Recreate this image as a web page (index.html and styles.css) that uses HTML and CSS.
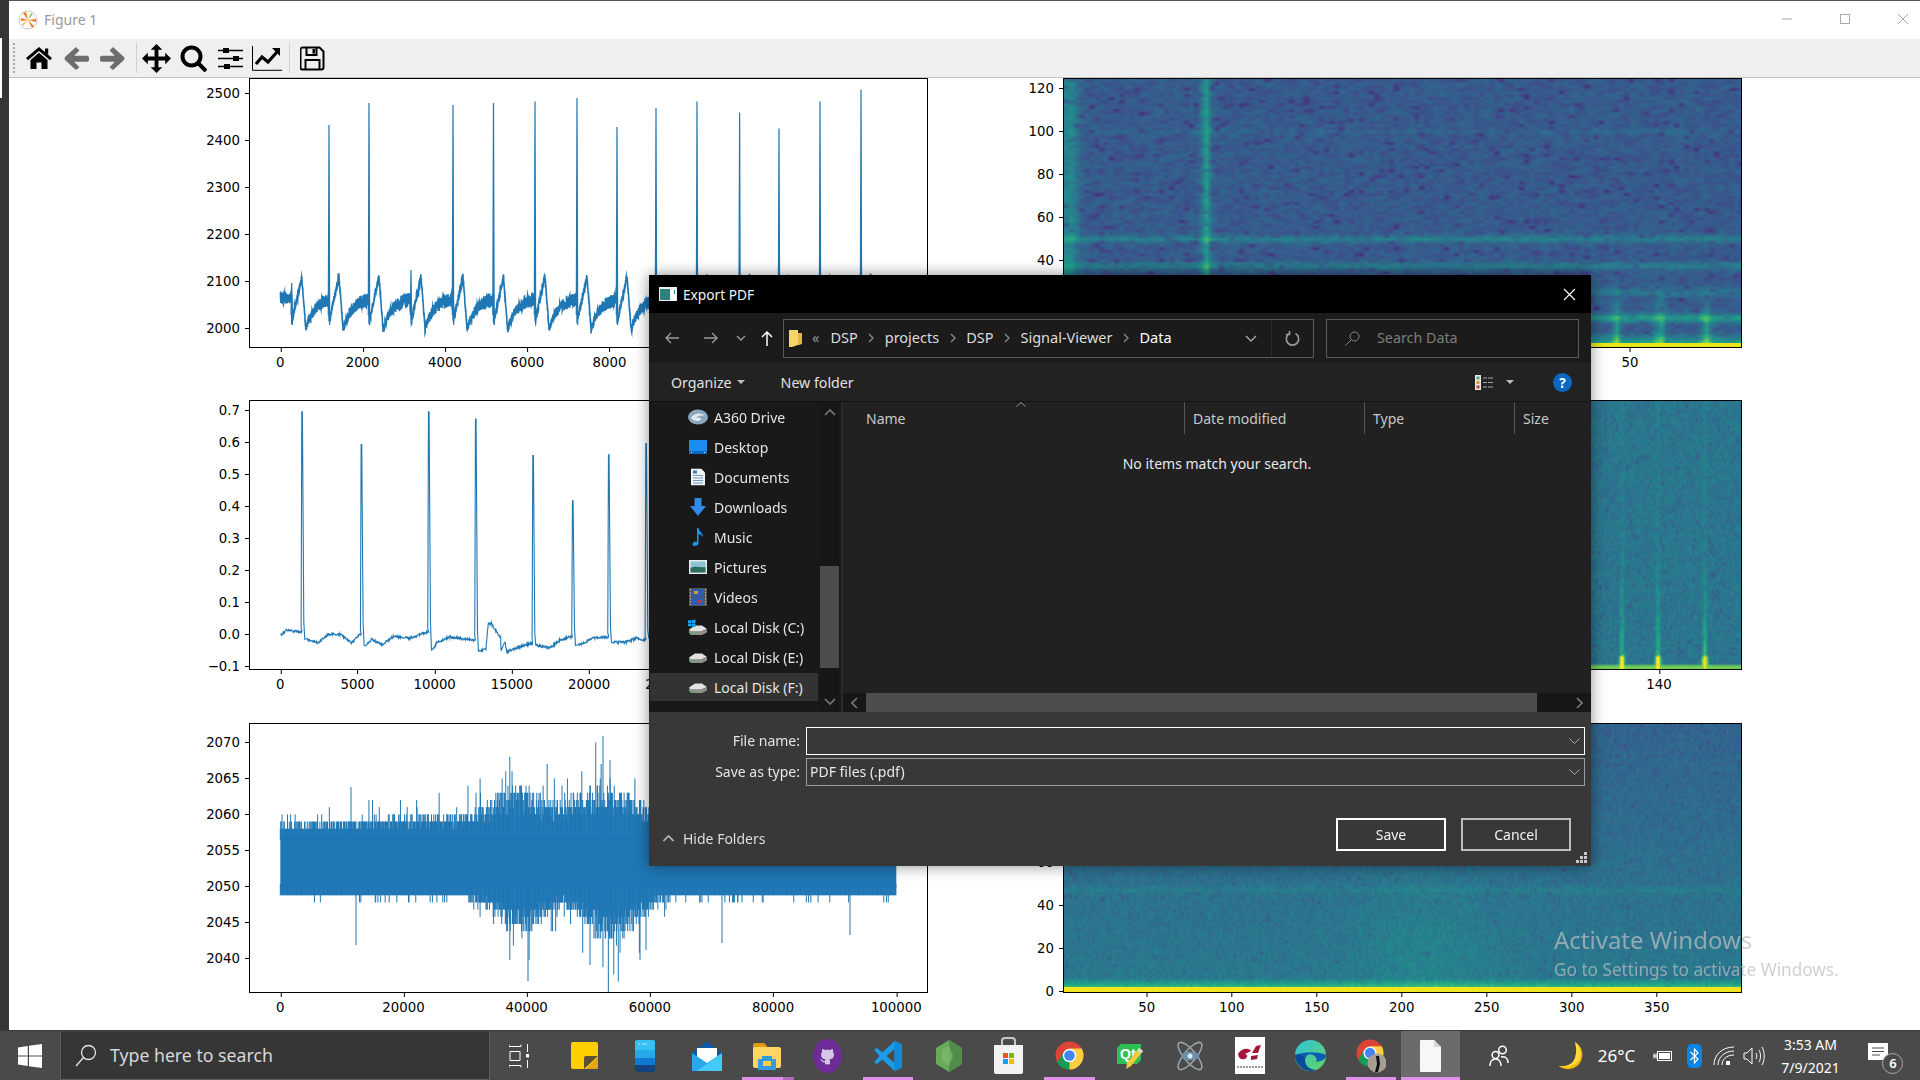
FILE: index.html
```html
<!DOCTYPE html>
<html lang="en">
  <head>
    <meta charset="UTF-8" />
    <title>Figure 1</title>
    <link rel="stylesheet" href="styles.css">
  </head>
  <body>
    <svg class="defs" width="0" height="0">
      <symbol id="chrome" viewBox="0 0 30 30">
        <circle cx="15" cy="15" r="14.5" fill="#db4437" />
        <path d="M15 15 2.4 22.3A14.5 14.5 0 0 0 15 29.5Z" fill="#0f9d58" />
        <path d="M15 15 15 29.5A14.5 14.5 0 0 0 27.6 7.8L15 7.8Z" fill="#ffcd40" />
        <path d="M15 15 2.4 22.3 8.7 11.4Z" fill="#0f9d58" />
        <circle cx="15" cy="15" r="7" fill="#fff" />
        <circle cx="15" cy="15" r="5.5" fill="#4285f4" />
      </symbol>
      <symbol id="disk" viewBox="0 0 20 14">
        <path d="M1 7.500V11l2 2h11l5-2.500v-3L13 9.500H3z" fill="#8f8f8f" />
        <path d="M1 7.500 7 3.500h7l5 3.500-6 2.500H3z" fill="#e2e2e2" />
        <rect x="3.500" y="10.500" width="3" height="1.500" fill="#46c34c" />
      </symbol>
      <symbol id="chev" viewBox="0 0 10 10">
        <path d="M3 1l4 4-4 4" fill="none" stroke="currentColor" stroke-width="1.4" />
      </symbol>
    </svg>

    <div class="screen">
      <div class="desk">
        <div class="edge"><i></i></div>
        <div class="window">
          <div class="titlebar">
            <svg class="fig-icon" viewBox="0 0 20 20" width="20" height="20">
              <circle cx="10" cy="10" r="9" fill="#fff" stroke="#c9c9c9" />
              <path d="M10 10 5 3l3-1zM10 10l8-1 0 3zM10 10l6 6-2 2zM10 10 3 11l0-3z" fill="#ef7a22" />
              <path d="M10 10l3-7 2 1z" fill="#8ec33f" />
              <path d="M10 10 5 16l-1-2z" fill="#f6c22c" />
            </svg>
            <span class="fig-title">Figure 1</span>
            <div class="win-btns">
              <svg width="12" height="12" viewBox="0 0 12 12"><path d="M1 6h10" stroke="#a8a8a8" /></svg>
              <svg width="12" height="12" viewBox="0 0 12 12"><rect x="1.5" y="1.5" width="9" height="9" fill="none" stroke="#a8a8a8" /></svg>
              <svg width="12" height="12" viewBox="0 0 12 12"><path d="M1 1l10 10M11 1 1 11" stroke="#a8a8a8" /></svg>
            </div>
          </div>

          <div class="toolbar">
            <span class="grip"></span>
            <svg class="tool t-home" width="26" height="22" viewBox="0 0 26 22">
              <path d="M13 0 26 11l-2 2.2L13 4 2 13.2 0 11zM19 1.5h3.2v6L19 5z" />
              <path d="M4.5 13 13 5.8 21.5 13v9h-6v-6.5h-5V22h-6z" />
            </svg>
            <svg class="tool t-back" width="25" height="25" viewBox="0 0 25 25">
              <path d="M12 1l3.4 3.4-5.2 5.4H23c1.3 0 2 1 2 2v2c0 1-.7 2-2 2H10.2l5.2 5.4L12 24 1.3 14.2c-1-1-1-2.4 0-3.4z" fill="#6d6d6d" />
            </svg>
            <svg class="tool t-fwd" width="25" height="25" viewBox="0 0 25 25">
              <path d="M13 1 9.6 4.4l5.2 5.4H2c-1.3 0-2 1-2 2v2c0 1 .7 2 2 2h12.800l-5.200 5.400L13 24l10.700-9.800c1-1 1-2.400 0-3.400z" fill="#6d6d6d" />
            </svg>
            <span class="tool-sep"></span>
            <svg class="tool t-move" width="29" height="29" viewBox="0 0 30 30">
              <path d="M15 0l6 6h-4v7h7V9l6 6-6 6v-4h-7v7h4l-6 6-6-6h4v-7H6v4l-6-6 6-6v4h7V6H9z" />
            </svg>
            <svg class="tool t-zoom" width="27" height="27" viewBox="0 0 27 27">
              <circle cx="11.5" cy="11.5" r="9" fill="none" stroke="#000" stroke-width="4" />
              <path d="M18 18l8 8" stroke="#000" stroke-width="4" />
            </svg>
            <svg class="tool t-sliders" width="25" height="23" viewBox="0 0 25 23">
              <path d="M0 3.5h25M0 11.5h25M0 19.5h25" stroke="#000" stroke-width="1.6" />
              <rect x="5" y="1" width="6" height="5" />
              <rect x="15" y="9" width="6" height="5" />
              <rect x="6" y="17" width="6" height="5" />
            </svg>
            <svg class="tool t-chart" width="30" height="25" viewBox="0 0 30 25">
              <path d="M.5 0v24.3H30" fill="none" stroke="#000" />
              <path d="M4 18l6-7 6 5 9-10" fill="none" stroke="#000" stroke-width="3.2" />
              <path d="M20 2h8v8z" />
            </svg>
            <span class="tool-sep"></span>
            <svg class="tool t-save" width="25" height="25" viewBox="0 0 25 25">
              <path d="M2.500 1.500h17l4 4v16a2 2 0 0 1-2 2h-19a2 2 0 0 1-2-2v-18a2 2 0 0 1 2-2z" fill="none" stroke="#000" stroke-width="2" />
              <path d="M6.500 2v7h10V2M5.500 23v-9h14v9" fill="none" stroke="#000" stroke-width="2" />
              <rect x="12.5" y="3" width="2.5" height="4.5" />
            </svg>
          </div>

          <div class="figure">
            <div class="plot" id="sig1"><canvas></canvas></div>
            <div class="plot" id="spec1"><canvas></canvas></div>
            <div class="plot" id="sig2"><canvas></canvas></div>
            <div class="plot" id="spec2"><canvas></canvas></div>
            <div class="plot" id="sig3"><canvas></canvas></div>
            <div class="plot" id="spec3"><canvas></canvas></div>
          </div>
        </div>
      </div>

      <div class="taskbar">
        <div class="start">
          <svg width="24" height="24" viewBox="0 0 24 24" fill="#fff">
            <path d="M0 3.400 9.800 2v9.400H0zM11 1.800 24 0v11.400H11zM0 12.600h9.800V22L0 20.600zM11 12.600h13V24l-13-1.800z" />
          </svg>
        </div>
        <div class="search">
          <svg width="22" height="24" viewBox="0 0 22 24" fill="none" stroke="#e6e6e6" stroke-width="1.3">
            <circle cx="13.5" cy="8.5" r="7" />
            <path d="M8.500 13.500 1 22" />
          </svg>
          <span>Type here to search</span>
        </div>
        <div class="taskview">
          <svg width="20" height="24" viewBox="0 0 20 24" fill="none" stroke="#fff">
            <path d="M0 2.500h12M0 21.500h12M1 7.500h10v9H1zM0 .5v2M12 .5v2M0 21.500v2M12 21.500v2M18.500 0v8M18.500 16v8" />
            <rect x="17" y="10" width="3" height="3.5" fill="#fff" stroke="none" />
          </svg>
        </div>

        <div class="slot">
          <svg width="27" height="27" viewBox="0 0 27 27">
            <rect width="27" height="27" rx="2" fill="#ffcf00" />
            <path d="M13 27V16a2 2 0 0 1 2-2h12L13 27z" fill="#5d5136" />
            <path d="M15 27 27 15v10a2 2 0 0 1-2 2z" fill="#e8a317" />
          </svg>
        </div>
        <div class="slot slot-gap">
          <svg width="20" height="32" viewBox="0 0 20 32">
            <path d="M0 2a2 2 0 0 1 2-2h16a2 2 0 0 1 2 2v8H0z" fill="#35c1f1" />
            <rect y="10" width="20" height="8" fill="#28a8ea" />
            <rect y="18" width="20" height="7" fill="#0f78d4" />
            <path d="M0 25h20v5a2 2 0 0 1-2 2H2a2 2 0 0 1-2-2z" fill="#14447d" />
            <path d="M3 4h2M7 4h5" stroke="#bde9fb" />
          </svg>
        </div>
        <div class="slot">
          <svg width="30" height="30" viewBox="0 0 30 30">
            <path d="M0 12 15 0l15 12v6H0z" fill="#0a5aa8" />
            <path d="M5 7h20v10l-10 6-10-6z" fill="#fff" />
            <path d="M0 12l15 10 15-10v18H0z" fill="#28a8ea" />
            <path d="M30 12v18H5z" fill="#50d9ff" opacity=".7" />
          </svg>
        </div>
        <div class="slot open open-split">
          <svg width="28" height="28" viewBox="0 0 28 28">
            <path d="M0 3a2 2 0 0 1 2-2h9l3 3v3H0z" fill="#e29b0c" />
            <rect y="5" width="28" height="21" rx="2" fill="#ffd564" />
            <path d="M5 28V17h4v-3h10v3h4v11z" fill="#3a9ae0" />
            <rect x="10" y="19" width="8" height="5" fill="#ffcf4a" />
          </svg>
        </div>
        <div class="slot">
          <svg width="29" height="34" viewBox="0 0 29 34">
            <ellipse cx="14.5" cy="17" rx="14.5" ry="17" fill="#6d2c97" />
            <circle cx="14.5" cy="16" r="9.5" fill="#d8c6e6" />
            <g transform="translate(4.500 6) scale(1.250)">
              <path fill="#6d2c97" d="M8 0C3.580 0 0 3.580 0 8c0 3.540 2.290 6.530 5.470 7.590.4.070.55-.17.55-.38 0-.19-.01-.82-.01-1.490-2.010.37-2.530-.49-2.690-.94-.09-.23-.48-.94-.82-1.130-.28-.15-.68-.52-.01-.53.63-.01 1.080.58 1.230.82.72 1.210 1.870.87 2.330.66.070-.52.280-.87.510-1.070-1.780-.2-3.640-.89-3.640-3.950 0-.87.310-1.590.82-2.150-.08-.2-.36-1.020.08-2.120 0 0 .67-.21 2.200.82.640-.18 1.320-.27 2-.27s1.360.09 2 .27c1.530-1.040 2.200-.82 2.200-.82.44 1.100.16 1.920.08 2.120.51.560.82 1.270.82 2.150 0 3.070-1.870 3.750-3.650 3.950.29.250.54.730.54 1.480 0 1.070-.01 1.930-.01 2.200 0 .21.150.46.550.38A8.013 8.013 0 0 0 16 8c0-4.420-3.580-8-8-8z" />
            </g>
          </svg>
        </div>
        <div class="slot open">
          <svg width="30" height="30" viewBox="0 0 30 30">
            <path fill-rule="evenodd" d="M21.500 0 9.500 11.500 3.800 7 1 8.500 6.500 15 1 21.500 3.800 23l5.700-4.500L21.500 30 29 26.500v-23zm0 8v14l-8-7z" fill="#1a9ce8" />
            <path d="M21.500 0 29 3.500v23L21.500 30z" fill="#0f8ad4" />
          </svg>
        </div>
        <div class="slot">
          <svg width="26" height="32" viewBox="0 0 26 32">
            <path d="M13 0l13 8v16l-13 8-13-8V8z" fill="#68a95c" />
            <path d="M13 0l13 8v16l-13 8z" fill="#4f8f49" />
            <path d="M6 10l7-4 4 10-4 10-7-6z" fill="#7dbb6c" opacity=".7" />
          </svg>
        </div>
        <div class="slot">
          <svg width="29" height="37" viewBox="0 0 29 37">
            <path d="M8 8V4a3 3 0 0 1 3-3h7a3 3 0 0 1 3 3v4" fill="none" stroke="#c8c8c8" stroke-width="2" />
            <path d="M0 8h29v27a2 2 0 0 1-2 2H2a2 2 0 0 1-2-2z" fill="#f2f2f2" />
            <rect x="9" y="16" width="5" height="5" fill="#f25022" />
            <rect x="15" y="16" width="5" height="5" fill="#7fba00" />
            <rect x="9" y="22" width="5" height="5" fill="#00a4ef" />
            <rect x="15" y="22" width="5" height="5" fill="#ffb900" />
          </svg>
        </div>
        <div class="slot open">
          <svg width="29" height="29"><use href="#chrome" /></svg>
        </div>
        <div class="slot">
          <svg width="26" height="28" viewBox="0 0 26 28">
            <path d="M4 2h20v16l-4 4H0V6z" fill="#2fbf55" />
            <text x="3" y="17" class="qt-mark">Qt</text>
            <path d="M22 6l4 3-12 15-5 3 1-6z" fill="#f6c83c" />
            <path d="M22 6l4 3-2 2.500-4-3z" fill="#d9d9d9" />
          </svg>
        </div>
        <div class="slot">
          <svg width="28" height="34" viewBox="0 0 28 34" fill="none" stroke="#9aa3a8" stroke-width="1.6">
            <ellipse cx="14" cy="17" rx="6" ry="17" transform="rotate(40 14 17)" />
            <ellipse cx="14" cy="17" rx="6" ry="17" transform="rotate(-40 14 17)" />
            <ellipse cx="14" cy="17" rx="9" ry="4.5" fill="#6e8fa8" stroke="none" />
            <circle cx="14" cy="17" r="2.5" fill="#dfe7ee" stroke="none" />
          </svg>
        </div>
        <div class="slot">
          <svg width="30" height="37" viewBox="0 0 30 37">
            <rect width="30" height="37" fill="#fff" />
            <path d="M3 17c4-7 12-6 13-3l-6 3c3 1 3 3 0 5-3 1-6 0-7-5zM17 16l4-7 5-1-3 8zM16 19l7-1-1 4-6 1z" fill="#a6163a" />
            <path d="M2 30h26" stroke="#9a9a9a" stroke-width="2" stroke-dasharray="2 1" />
          </svg>
        </div>
        <div class="slot">
          <svg width="31" height="31" viewBox="0 0 31 31">
            <defs>
              <linearGradient id="edgeg" x1="0" y1="0" x2="1" y2="1">
                <stop offset="0" stop-color="#2fc3e0" />
                <stop offset="1" stop-color="#63d35c" />
              </linearGradient>
            </defs>
            <circle cx="15.5" cy="15.5" r="15.5" fill="url(#edgeg)" />
            <path d="M0 15C1 27 12 33 21 30c-6 0-11-4-11-9 0-5 4-8 8-6s4 5 3 7c5-1 10-2 10-7C25 12 12 11 0 15z" fill="#0f5cb0" />
            <path d="M10 21c0 5 5 9 11 9-9 3-20-3-21-15 3-1 10-1 10 6z" fill="#0a4a96" />
          </svg>
        </div>
        <div class="slot open">
          <svg class="chrome-user" width="30" height="34" viewBox="0 0 30 34">
            <use href="#chrome" width="28" height="28" x="0" y="0" />
            <circle cx="21" cy="24" r="9.5" fill="#a79f93" />
            <path d="M20 17h3l1 8-2 8h-3l2-8z" fill="#111" />
          </svg>
        </div>
        <div class="slot open active">
          <svg width="21" height="32" viewBox="0 0 21 32">
            <path d="M1 0h13l7 7v24a1 1 0 0 1-1 1H1a1 1 0 0 1-1-1V1a1 1 0 0 1 1-1z" fill="#f7f8f9" />
            <path d="M14 0l7 7h-7z" fill="#d4d6d8" />
          </svg>
        </div>

        <div class="tray">
          <div class="tray-item people">
            <svg width="20" height="22" viewBox="0 0 20 22" fill="none" stroke="#fff" stroke-width="1.5">
              <circle cx="13.5" cy="5" r="3.8" />
              <circle cx="6.5" cy="10" r="3.4" />
              <path d="M1 21c0-4 2-7 5.500-7s5.500 3 5.500 7M12 12c4-1 7 1 7 6" />
            </svg>
          </div>
          <div class="tray-item moon">
            <svg width="24" height="28" viewBox="0 0 24 28">
              <path d="M16 0c7 4 9 12 6 19-3 7-12 10-19 7-2-1-3-2-3-2 8 1 14-2 16-8 2-6 1-12 0-16z" fill="#f5b800" />
              <path d="M16 0c6 5 7 12 4 18-3 5-10 8-17 7-2 0-3-1-3-1 8 1 14-2 16-8 2-6 1-12 0-16z" fill="#ffd83d" />
            </svg>
          </div>
          <div class="tray-item temp">26°C</div>
          <div class="tray-item battery">
            <svg width="20" height="14" viewBox="0 0 20 14" fill="none" stroke="#fff">
              <rect x="4.5" y="2.5" width="14" height="9" />
              <rect x="6" y="4" width="11" height="6" fill="#fff" stroke="none" />
              <path d="M0 7h4M1 4.500v5M3 4.500v5" />
            </svg>
          </div>
          <div class="tray-item">
            <svg width="15" height="24" viewBox="0 0 15 24">
              <rect width="15" height="24" rx="5" fill="#0a84e8" />
              <path d="M3.500 8 11 15l-3.500 4V5L11 9l-7.500 7" fill="none" stroke="#fff" stroke-width="1.2" />
            </svg>
          </div>
          <div class="tray-item">
            <svg width="22" height="20" viewBox="0 0 22 20" fill="none" stroke="#fff">
              <path d="M1 19C1 9 9 1 21 1M5 19c0-7 6-14 16-14M9 19c0-5 4-10 12-10" />
              <rect x="13" y="15" width="4" height="4" fill="#fff" stroke="none" />
            </svg>
          </div>
          <div class="tray-item">
            <svg width="22" height="22" viewBox="0 0 22 22" fill="none" stroke="#fff">
              <path d="M1 8v6h3l5 5V3L4 8zM13 8c1 2 1 4 0 6M16 5c2 3 2 9 0 12M19 2c3 5 3 13 0 18" />
            </svg>
          </div>
          <div class="clock">
            <span>3:53 AM</span>
            <span>7/9/2021</span>
          </div>
          <div class="notif">
            <svg width="20" height="21" viewBox="0 0 20 21">
              <path d="M0 0h20v17H0z" fill="#fff" />
              <path d="M4 5h12M4 8.500h12M4 12h8" stroke="#4a4a4a" stroke-width="1.2" />
            </svg>
            <span class="badge">6</span>
          </div>
        </div>
      </div>

      <div class="watermark">
        <div class="wm-big">Activate Windows</div>
        <div class="wm-small">Go to Settings to activate Windows.</div>
      </div>

      <div class="dialog">
        <div class="dlg-title">
          <svg width="18" height="14" viewBox="0 0 18 14">
            <rect width="18" height="14" fill="#f0f0f0" />
            <rect x="1" y="2" width="10" height="11" fill="#2f7f7a" />
            <rect x="12" y="2" width="5" height="11" fill="#fff" />
            <rect x="15" y="3" width="1" height="4" fill="#2f7f7a" />
          </svg>
          <span>Export PDF</span>
          <svg class="dlg-close" width="13" height="13" viewBox="0 0 13 13">
            <path d="M1 1l11 11M12 1 1 12" stroke="#fff" stroke-width="1.1" />
          </svg>
        </div>

        <div class="dlg-nav">
          <svg class="nav-btn" width="14" height="12" viewBox="0 0 14 12" fill="none" stroke="#9a9a9a" stroke-width="1.4"><path d="M14 6H1M6 1 1 6l5 5" /></svg>
          <svg class="nav-btn fwd" width="14" height="12" viewBox="0 0 14 12" fill="none" stroke="#9a9a9a" stroke-width="1.4"><path d="M0 6h13M8 1l5 5-5 5" /></svg>
          <svg class="nav-btn drop" width="10" height="6" viewBox="0 0 10 6" fill="none" stroke="#9a9a9a" stroke-width="1.4"><path d="M1 1l4 4 4-4" /></svg>
          <svg class="nav-btn up" width="12" height="15" viewBox="0 0 12 15" fill="none" stroke="#fff" stroke-width="1.5"><path d="M6 15V1M1 6l5-5 5 5" /></svg>
          <div class="address">
            <svg class="addr-folder" width="13" height="17" viewBox="0 0 13 17">
              <path d="M0 0h9v3h3v11l-9 3H0z" fill="#f5d46a" />
              <path d="M9 3h4v11l-4 1z" fill="#e6b53d" />
            </svg>
            <span class="addr-more">«</span>
            <span class="crumb">DSP</span>
            <svg class="chev" width="10" height="10"><use href="#chev" /></svg>
            <span class="crumb">projects</span>
            <svg class="chev" width="10" height="10"><use href="#chev" /></svg>
            <span class="crumb">DSP</span>
            <svg class="chev" width="10" height="10"><use href="#chev" /></svg>
            <span class="crumb">Signal-Viewer</span>
            <svg class="chev" width="10" height="10"><use href="#chev" /></svg>
            <span class="crumb current">Data</span>
            <svg class="addr-drop" width="12" height="7" viewBox="0 0 12 7" fill="none" stroke="#aaa" stroke-width="1.4"><path d="M1 1l5 5 5-5" /></svg>
            <span class="addr-refresh">
              <svg width="15" height="16" viewBox="0 0 15 16" fill="none" stroke="#9a9a9a" stroke-width="1.6">
                <path d="M4.500 3.500a6.200 6.200 0 1 0 6 0M4.500 1v3.500H1" />
              </svg>
            </span>
          </div>
          <div class="searchbox">
            <svg width="15" height="15" viewBox="0 0 15 15" fill="none" stroke="#8a8a8a"><circle cx="9.5" cy="5.5" r="4.5" /><path d="M6 9l-5.500 5.500" /></svg>
            <span>Search Data</span>
          </div>
        </div>

        <div class="dlg-cmd">
          <span class="cmd">Organize</span>
          <i class="caret"></i>
          <span class="cmd new-folder">New folder</span>
          <svg class="view-icon" width="18" height="15" viewBox="0 0 18 15">
            <rect width="6" height="15" fill="#e8e8e8" />
            <rect x="1.5" y="1.5" width="3" height="3" fill="#4a7" />
            <rect x="1.5" y="6" width="3" height="3" fill="#c93" />
            <rect x="1.5" y="10.5" width="3" height="3" fill="#b43" />
            <path d="M8 3h4M13 3h5M8 7.500h4M13 7.500h5M8 12h4M13 12h5" stroke="#aaa" />
          </svg>
          <i class="caret view-caret"></i>
          <span class="help">?</span>
        </div>

        <div class="dlg-body">
          <div class="nav-pane">
            <ul class="tree">
              <li>
                <svg width="20" height="16" viewBox="0 0 20 16"><ellipse cx="10" cy="8" rx="10" ry="7.5" fill="#8aa7bd" /><path d="M3 9c2-5 11-6 14-2-4-1-8 0-9 2 3-1 6 0 5 2-3 2-8 1-10-2z" fill="#dfe9f0" /></svg>
                A360 Drive
              </li>
              <li>
                <svg width="18" height="14" viewBox="0 0 18 14"><rect width="18" height="14" fill="#1d8bf0" /><path d="M0 11h18v3H0z" fill="#0d66c0" /><path d="M2 12.500h1M15 12.500h1" stroke="#fff" /></svg>
                Desktop
              </li>
              <li>
                <svg width="14" height="17" viewBox="0 0 14 17"><path d="M0 0h10l4 4v13H0z" fill="#f1f3f5" /><path d="M2 7h10M2 9.500h10M2 12h10M2 14.500h10" stroke="#6e9ac4" /><rect x="2" y="2" width="4" height="3" fill="#3a7fc0" /></svg>
                Documents
              </li>
              <li>
                <svg width="16" height="18" viewBox="0 0 16 18"><path d="M4.500 0h7v8H16l-8 10L0 8h4.500z" fill="#2e8be8" /></svg>
                Downloads
              </li>
              <li>
                <svg width="12" height="18" viewBox="0 0 12 18"><path d="M5 0h1.500c.5 4 5 5 4.500 9-1-2-3-3-4.500-3v9c0 2-2 3-4 3S0 16.500 1 15s2.500-1.500 4-1z" fill="#1e96ee" /></svg>
                Music
              </li>
              <li>
                <svg width="18" height="14" viewBox="0 0 18 14"><rect width="18" height="14" fill="#e9ecef" /><rect x="1.5" y="1.5" width="15" height="11" fill="#8ec5d6" /><path d="M1.500 8c5-3 10 0 15-1v5.500h-15z" fill="#2e6e5e" /></svg>
                Pictures
              </li>
              <li>
                <svg width="18" height="18" viewBox="0 0 18 18"><rect width="18" height="18" fill="#555" /><rect x="3" y="1" width="12" height="7.5" fill="#2a5fb5" /><rect x="3" y="9.5" width="12" height="7.5" fill="#2a5fb5" /><rect x="5" y="3" width="4" height="3" fill="#d93" /><rect x="8" y="12" width="4" height="3" fill="#c33" /><path d="M1.500 1v16M16.500 1v16" stroke="#bbb" stroke-dasharray="1.500 1.500" /></svg>
                Videos
              </li>
              <li>
                <svg width="20" height="18" viewBox="0 0 20 18"><use href="#disk" width="20" height="14" y="4" /><path d="M0 2.500 3.500 2v3H0zM4 2l3.500-.5V5H4zM0 5.500h3.500v3L0 8zM4 5.500h3.500v3.500L4 8.500z" fill="#10a5f5" /></svg>
                Local Disk (C:)
              </li>
              <li>
                <svg width="20" height="14"><use href="#disk" /></svg>
                Local Disk (E:)
              </li>
              <li class="selected">
                <svg width="20" height="14"><use href="#disk" /></svg>
                Local Disk (F:)
              </li>
              <li>
                <svg width="20" height="14"><use href="#disk" /></svg>
                New Volume (G:)
              </li>
            </ul>
            <div class="vscroll">
              <svg width="12" height="7" viewBox="0 0 12 7" fill="none" stroke="#7a7a7a" stroke-width="1.6"><path d="M1 6l5-5 5 5" /></svg>
              <div class="vthumb"></div>
              <svg width="12" height="7" viewBox="0 0 12 7" fill="none" stroke="#7a7a7a" stroke-width="1.6"><path d="M1 1l5 5 5-5" /></svg>
            </div>
          </div>
          <div class="list-pane">
            <div class="list-head">
              <span class="col col-name">Name<svg class="sort" width="10" height="5" viewBox="0 0 10 5" fill="none" stroke="#999"><path d="M.5 4.500 5 .5l4.500 4" /></svg></span>
              <span class="col col-date">Date modified</span>
              <span class="col col-type">Type</span>
              <span class="col col-size">Size</span>
            </div>
            <div class="empty">No items match your search.</div>
            <div class="hscroll">
              <svg width="7" height="12" viewBox="0 0 7 12" fill="none" stroke="#7a7a7a" stroke-width="1.6"><path d="M6 1 1 6l5 5" /></svg>
              <div class="hthumb"></div>
              <svg width="7" height="12" viewBox="0 0 7 12" fill="none" stroke="#7a7a7a" stroke-width="1.6"><path d="M1 1l5 5-5 5" /></svg>
            </div>
          </div>
        </div>

        <div class="dlg-foot">
          <div class="field">
            <label>File name:</label>
            <div class="combo focus">
              <span></span>
              <svg width="11" height="6" viewBox="0 0 11 6" fill="none" stroke="#aaa"><path d="M.5.5l5 5 5-5" /></svg>
            </div>
          </div>
          <div class="field">
            <label>Save as type:</label>
            <div class="combo">
              <span>PDF files (.pdf)</span>
              <svg width="11" height="6" viewBox="0 0 11 6" fill="none" stroke="#aaa"><path d="M.5.5l5 5 5-5" /></svg>
            </div>
          </div>
          <div class="foot-row">
            <div class="hide-folders">
              <svg width="11" height="7" viewBox="0 0 11 7" fill="none" stroke="#bbb" stroke-width="1.6"><path d="M.5 6l5-5 5 5" /></svg>
              <span>Hide Folders</span>
            </div>
            <div class="btn primary">Save</div>
            <div class="btn">Cancel</div>
          </div>
          <svg class="resize" width="12" height="12" viewBox="0 0 12 12" fill="#c8c8c8">
            <rect x="8" y="0" width="3" height="3" /><rect x="4" y="4" width="3" height="3" /><rect x="8" y="4" width="3" height="3" />
            <rect x="0" y="8" width="3" height="3" /><rect x="4" y="8" width="3" height="3" /><rect x="8" y="8" width="3" height="3" />
          </svg>
        </div>
      </div>
    </div>

    <script src="plots.js"></script>
  </body>
</html>
```

FILE: styles.css
```css
* {
  box-sizing: border-box;
}

html,
body {
  margin: 0;
  padding: 0;
  background-color: #fff;
}

body {
  font-family: "Noto Sans", sans-serif;
  overflow: hidden;
}

.defs {
  position: absolute;
}

.screen {
  position: relative;
  width: 1920px;
  height: 1080px;
  display: flex;
  flex-direction: column;
  overflow: hidden;
}

.desk {
  flex: 1;
  display: flex;
  min-height: 0;
}

.edge {
  width: 9px;
  background-color: #363636;
  padding-top: 38px;
}

.edge i {
  display: block;
  width: 2px;
  height: 60px;
  background-color: #fff;
}

.window {
  flex: 1;
  background-color: #fff;
  border-top: 1px solid #555;
  min-width: 0;
}

/* matplotlib window */
.titlebar {
  height: 38px;
  display: flex;
  align-items: center;
  padding-left: 9px;
  color: #999;
}

.fig-icon {
  margin-right: 6px;
  margin-top: -1px;
}

.fig-title {
  font-size: 14px;
  margin-top: -1px;
}

.win-btns {
  margin-left: auto;
  display: flex;
  gap: 46px;
  padding-right: 11px;
  margin-top: -2px;
}

.toolbar {
  height: 39px;
  background-color: #efefef;
  border-bottom: 1px solid #c4c4c4;
  display: flex;
  align-items: center;
  padding-left: 4px;
}

.grip {
  width: 3px;
  height: 30px;
  margin-right: 10px;
  border-left: 2px dotted #a8a8a8;
}

.tool {
  flex: none;
}

.tool-sep {
  width: 1px;
  height: 30px;
  margin-left: 11px;
  background-color: #cfcfcf;
}

.t-back {
  margin-left: 12px;
}

.t-fwd {
  margin-left: 11px;
}

.t-move {
  margin-left: 5px;
}

.t-zoom {
  margin-left: 9px;
}

.t-sliders {
  margin-left: 11px;
}

.t-chart {
  margin-left: 9px;
}

.t-chart + .tool-sep {
  margin-left: 7px;
}

.t-save {
  margin-left: 10px;
}

.figure {
  display: grid;
  grid-template-columns: 679px 679px;
  grid-template-rows: 322px 323px 270px;
  column-gap: 135px;
  margin-left: 240px;
}

.plot {
  position: relative;
  height: 270px;
  border: 1px solid #000;
  font-family: "DejaVu Sans", sans-serif;
  font-size: 13.3px;
  color: #000;
}

.plot canvas {
  display: block;
}

.xt,
.yt {
  position: absolute;
  line-height: 16px;
  white-space: nowrap;
}

.xt {
  top: 100%;
  padding-top: 8px;
  transform: translateX(-50%);
}

.xt::before {
  content: "";
  position: absolute;
  top: 0;
  left: 50%;
  width: 1px;
  height: 5px;
  background-color: #000;
}

.yt {
  right: 100%;
  padding-right: 10px;
  margin-top: 1px;
  transform: translateY(-50%);
}

.yt::after {
  content: "";
  position: absolute;
  right: 0;
  top: calc(50% - 1px);
  width: 5px;
  height: 1px;
  background-color: #000;
}

/* taskbar */
.taskbar {
  height: 50px;
  flex: none;
  display: flex;
  align-items: stretch;
  background-color: #4a4a4a;
  border-top: 1px solid #3a3a3a;
  color: #fff;
}

.start {
  width: 60px;
  flex: none;
  display: flex;
  align-items: center;
  justify-content: center;
}

.search {
  width: 430px;
  flex: none;
  background-color: #363636;
  border: 1px solid #5c5c5c;
  border-top-color: #444;
  display: flex;
  align-items: center;
  padding-left: 14px;
  gap: 13px;
  font-size: 17.7px;
  color: #d8d8d8;
}

.search span {
  margin-top: -2px;
}

.taskview {
  width: 64px;
  flex: none;
  display: flex;
  align-items: center;
  justify-content: center;
  padding-right: 6px;
}

.slot {
  position: relative;
  width: 60.4px;
  flex: none;
  display: flex;
  align-items: center;
  justify-content: center;
}

.slot-gap {
  margin-right: 2px;
}

.open::after {
  content: "";
  position: absolute;
  left: 5px;
  right: 5px;
  bottom: 0;
  height: 3px;
  background-color: #df8fe8;
}

.open-split::after {
  left: 5px;
  right: 15px;
}

.open-split::before {
  content: "";
  position: absolute;
  right: 4px;
  width: 11px;
  bottom: 0;
  height: 3px;
  background-color: #b06bb8;
}

.active {
  width: 59px;
  background-color: #6b6b6b;
}

.active::after {
  left: 0;
  right: 0;
}

.tray {
  flex: 1;
  display: flex;
  align-items: center;
  padding-left: 9px;
}

.tray-item {
  width: 30px;
  display: flex;
  align-items: center;
  justify-content: center;
  flex: none;
}

.people {
  width: 60px;
  margin-right: 22px;
}

.moon {
  width: 40px;
}

.temp {
  width: 50px;
  font-size: 17px;
  margin-right: 7px;
}

.battery {
  margin-right: 1px;
}

.clock {
  width: 82px;
  display: flex;
  flex-direction: column;
  align-items: center;
  font-size: 14px;
  line-height: 23px;
  flex: none;
}

.notif {
  position: relative;
  width: 58px;
  display: flex;
  justify-content: center;
  padding-right: 4px;
  padding-bottom: 4px;
}

.badge {
  position: absolute;
  left: 31px;
  top: 10px;
  width: 21px;
  height: 21px;
  border-radius: 50%;
  background-color: #4a4a4a;
  border: 1px solid #aaa;
  text-align: center;
  font-size: 13px;
  font-weight: 600;
  line-height: 19px;
}

/* windows watermark sits over the page */
.watermark {
  position: absolute;
  left: 1554px;
  top: 923px;
  color: rgba(186, 190, 192, 0.72);
  white-space: nowrap;
}

.wm-big {
  font-size: 24px;
  line-height: 34px;
}

.wm-small {
  font-size: 17.2px;
  line-height: 26px;
}

/* export dialog */
.dialog {
  position: absolute;
  left: 649px;
  top: 275px;
  width: 942px;
  height: 591px;
  display: flex;
  flex-direction: column;
  background-color: #383838;
  box-shadow: 0 0 14px rgba(0, 0, 0, 0.45);
  color: #e8e8e8;
  font-size: 14px;
}

.dlg-title {
  height: 38px;
  flex: none;
  background-color: #000;
  color: #f2f2f2;
  display: flex;
  align-items: center;
  padding-left: 10px;
  gap: 6px;
  font-size: 13.7px;
}

.dlg-close {
  margin-left: auto;
  margin-right: 15px;
}

.dlg-nav {
  height: 50px;
  flex: none;
  background-color: #1b1b1b;
  display: flex;
  align-items: center;
  padding-left: 16px;
}

.nav-btn {
  flex: none;
}

.fwd {
  margin-left: 25px;
}

.drop {
  margin-left: 18px;
}

.up {
  margin-left: 15px;
}

.address {
  margin-left: 10px;
  width: 531px;
  height: 39px;
  border: 1px solid #5a5a5a;
  display: flex;
  align-items: center;
  padding-left: 5px;
  font-size: 14.5px;
  color: #dcdcdc;
}

.crumb {
  margin-top: -2px;
}

.addr-more {
  margin-left: 10px;
  margin-right: 11px;
  margin-top: -2px;
  color: #999;
}

.chev {
  margin: 0 8.5px;
  color: #888;
  margin-top: -1px;
}

.current {
  color: #fff;
}

.addr-drop {
  margin-left: auto;
  margin-right: 14px;
}

.addr-refresh {
  width: 42px;
  height: 100%;
  border-left: 1px solid #2a2a2a;
  display: flex;
  align-items: center;
  justify-content: center;
}

.searchbox {
  margin-left: 12px;
  width: 253px;
  height: 39px;
  border: 1px solid #5a5a5a;
  display: flex;
  align-items: center;
  padding-left: 18px;
  gap: 17px;
  font-size: 14.3px;
  color: #7d7d7d;
}

.searchbox span {
  margin-top: -2px;
}

.dlg-cmd {
  height: 39px;
  flex: none;
  background-color: #222;
  border-bottom: 1px solid #111;
  display: flex;
  align-items: center;
  padding-left: 22px;
}

.cmd {
  color: #e0e0e0;
  margin-top: 1px;
  font-size: 14.2px;
}

.caret {
  width: 0;
  height: 0;
  border-left: 4px solid transparent;
  border-right: 4px solid transparent;
  border-top: 4px solid #bdbdbd;
  margin-left: 5px;
}

.new-folder {
  margin-left: 36px;
}

.view-icon {
  margin-left: auto;
}

.view-caret {
  margin-left: 13px;
}

.help {
  width: 19px;
  height: 19px;
  margin-left: 39px;
  margin-right: 19px;
  border-radius: 50%;
  background-color: #0a68c4;
  color: #fff;
  font-size: 14px;
  font-weight: 700;
  text-align: center;
  line-height: 19px;
}

.dlg-body {
  height: 310px;
  flex: none;
  display: flex;
}

.nav-pane {
  width: 194px;
  flex: none;
  display: flex;
  background-color: #191919;
  border-right: 2px solid #2a2a2a;
  overflow: hidden;
}

.tree {
  list-style: none;
  margin: 0;
  padding: 0;
  width: 169px;
  flex: none;
  height: 310px;
  overflow: hidden;
}

.tree li {
  height: 30px;
  display: flex;
  align-items: center;
  position: relative;
  padding-left: 64px;
  margin-left: 1px;
  color: #e4e4e4;
  white-space: nowrap;
}

.tree svg {
  position: absolute;
  left: 48px;
  top: 50%;
  transform: translate(-50%, -50%);
}

.tree .selected {
  background-color: #333;
  height: 28px;
  margin: 1px 0 1px 1px;
}

.vscroll {
  width: 19px;
  flex: none;
  margin-left: 2px;
  background-color: #171717;
  display: flex;
  flex-direction: column;
  align-items: center;
  justify-content: space-between;
  padding: 7px 0;
  position: relative;
}

.vthumb {
  position: absolute;
  left: 0;
  right: 0;
  top: 164px;
  height: 102px;
  background-color: #4d4d4d;
}

.list-pane {
  flex: 1;
  min-width: 0;
  background-color: #212121;
  display: flex;
  flex-direction: column;
  position: relative;
}

.list-head {
  height: 32px;
  flex: none;
  display: flex;
  font-size: 14px;
  color: #c8c8c8;
  align-items: stretch;
  line-height: 34px;
}

.col {
  display: flex;
  align-items: center;
  padding-left: 8px;
  padding-top: 2px;
  border-left: 1px solid #555;
  position: relative;
}

.col-name {
  width: 341px;
  padding-left: 23px;
  border-left: none;
}

.sort {
  position: absolute;
  left: 173px;
  top: 0;
}

.col-date {
  width: 180px;
}

.col-type {
  width: 150px;
}

.empty {
  flex: 1;
  text-align: center;
  padding-top: 20px;
  color: #e8e8e8;
}

.hscroll {
  height: 19px;
  flex: none;
  background-color: #171717;
  display: flex;
  align-items: center;
  padding-left: 8px;
  padding-right: 8px;
}

.hthumb {
  width: 671px;
  height: 100%;
  margin-left: 8px;
  margin-right: auto;
  background-color: #4d4d4d;
}

.dlg-foot {
  flex: 1;
  position: relative;
  padding-top: 14px;
}

.field {
  display: flex;
  align-items: center;
  height: 29px;
  margin-bottom: 2px;
}

.field label {
  width: 151px;
  text-align: right;
  color: #e4e4e4;
}

.combo {
  margin-left: 6px;
  width: 779px;
  height: 28px;
  border: 1px solid #9c9c9c;
  display: flex;
  align-items: center;
  justify-content: space-between;
  padding: 0 4px 0 3px;
  color: #e8e8e8;
}

.combo.focus {
  border-color: #fff;
}

.foot-row {
  position: absolute;
  left: 0;
  right: 0;
  top: 106px;
  display: flex;
  align-items: center;
}

.hide-folders {
  margin-left: 14px;
  margin-right: auto;
  margin-top: 8px;
  display: flex;
  align-items: center;
  gap: 9px;
  color: #dcdcdc;
}

.btn {
  width: 110px;
  height: 33px;
  border: 2px solid #bcbcbc;
  display: flex;
  align-items: center;
  justify-content: center;
  color: #f2f2f2;
  margin-right: 20px;
}

.btn.primary {
  border-color: #fff;
  margin-right: 15px;
}

.resize {
  position: absolute;
  right: 3px;
  bottom: 2px;
}

.qt-mark {
  font-family: "Liberation Sans", sans-serif;
  font-size: 14px;
  font-weight: 700;
  fill: #fff;
}
```

FILE: plots.js
```js
// small seeded random so the noise is the same on every load
let seed = 12345;
function rnd() {
  seed = (seed * 1664525 + 1013904223) % 4294967296;
  return seed / 4294967296;
}

const VIRIDIS = [
  [68, 1, 84], [72, 36, 117], [65, 68, 135], [53, 95, 141], [42, 120, 142],
  [33, 145, 140], [34, 168, 132], [68, 191, 112], [122, 209, 81], [189, 223, 38], [253, 231, 37],
];

function viridis(v) {
  v = Math.max(0, Math.min(0.9999, v)) * 10;
  const i = Math.floor(v);
  const f = v - i;
  return VIRIDIS[i].map((c, k) => c + (VIRIDIS[i + 1][k] - c) * f);
}

function gauss(x, c, s) {
  return Math.exp(-((x - c) * (x - c)) / (2 * s * s));
}

// canvas covers the inside of the axes, drawing uses page coordinates
function setup(id) {
  const plot = document.getElementById(id);
  const cv = plot.querySelector("canvas");
  cv.width = plot.clientWidth;
  cv.height = plot.clientHeight;
  const box = plot.getBoundingClientRect();
  const ctx = cv.getContext("2d");
  ctx.translate(-(Math.round(box.left) + 1), -(Math.round(box.top) + 1));
  return { plot, cv, ctx, left: Math.round(box.left) + 1, top: Math.round(box.top) + 1 };
}

function ticks(p, xs, ys) {
  xs.forEach(([label, px]) => {
    const s = document.createElement("span");
    s.className = "xt";
    s.textContent = label;
    s.style.left = px - p.left + "px";
    p.plot.appendChild(s);
  });
  ys.forEach(([label, py]) => {
    const s = document.createElement("span");
    s.className = "yt";
    s.textContent = label;
    s.style.top = py - p.top + "px";
    p.plot.appendChild(s);
  });
}

function series(labels, start, step) {
  return labels.map((l, i) => [l, start + i * step]);
}

function spectrogram(p, cw, ch, fn) {
  const w = Math.ceil(p.cv.width / cw);
  const h = Math.ceil(p.cv.height / ch);
  const off = document.createElement("canvas");
  off.width = w;
  off.height = h;
  const o = off.getContext("2d");
  const img = o.createImageData(w, h);
  for (let j = 0; j < h; j++) {
    for (let i = 0; i < w; i++) {
      const c = viridis(fn(p.left + (i + 0.5) * cw, p.top + (j + 0.5) * ch));
      const k = (j * w + i) * 4;
      img.data[k] = c[0];
      img.data[k + 1] = c[1];
      img.data[k + 2] = c[2];
      img.data[k + 3] = 255;
    }
  }
  o.putImageData(img, 0, 0);
  p.ctx.imageSmoothingEnabled = true;
  p.ctx.drawImage(off, p.left, p.top, w * cw, h * ch);
}

const BLUE = "#1f77b4";

function drawSig1() {
  const p = setup("sig1");
  ticks(p, series(["0", "2000", "4000", "6000", "8000"], 280.3, 82.3),
    series(["2500", "2400", "2300", "2200", "2100", "2000"], 93.3, 47));
  const beats = [
    [291.7, 283], [329, 125], [369, 103], [411, 270], [453, 105], [493.5, 103],
    [535, 101.6], [577, 98], [617, 127], [656, 108], [697, 101.6], [739.6, 112.6],
    [779, 128.6], [820, 101.6], [861, 89.4], [902, 2000],
  ];
  const c = p.ctx;
  c.strokeStyle = BLUE;
  c.lineWidth = 1.2;
  beats.forEach(([bx, pk]) => {
    if (pk < 2000) {
      c.beginPath();
      c.moveTo(bx - 0.7, 315);
      c.lineTo(bx, pk);
      c.lineTo(bx + 0.7, 325);
      c.stroke();
    }
  });
  c.lineWidth = 1.6;
  c.beginPath();
  let nb = 0;
  let prev = 250;
  for (let x = 280.3; x < 902; x += 0.15) {
    while (nb < beats.length && x >= beats[nb][0]) {
      prev = beats[nb][0];
      nb++;
    }
    const t = x - prev;
    let y;
    let a;
    if (prev === 250) {
      y = 298;
      a = 6;
    } else if (t < 10) {
      y = 322 - (t / 10) * 45;
      a = 4;
    } else if (t < 14) {
      y = 277 + ((t - 10) / 4) * 51;
      a = 3;
    } else {
      y = 330 - 32 * (1 - Math.exp(-(t - 14) / 9));
      a = 4 + Math.min(3, (t - 14) / 6);
    }
    c.lineTo(x, y + (rnd() - 0.5) * 2 * a);
  }
  c.stroke();
}

function drawSig2() {
  const p = setup("sig2");
  ticks(p, series(["0", "5000", "10000", "15000", "20000", "25000"], 280.3, 77.2),
    series(["0.7", "0.6", "0.5", "0.4", "0.3", "0.2", "0.1", "0.0", "\u22120.1"], 410, 32));
  // traced from the picture: x, y in a 3x / 2.52x crop at (240, 400), spikes carry a peak
  const pts = [
    [121, 593], [140, 580], [180, 585], [186, 585, 30], [200, 603], [235, 612], [265, 590], [300, 590],
    [335, 612], [360, 590], [364, 590, 112], [378, 618], [395, 603], [425, 617], [460, 596], [510, 600],
    [560, 585], [566, 585, 30], [578, 630], [590, 612], [630, 597], [700, 605], [707, 605, 48], [718, 633],
    [738, 625], [745, 563], [755, 565], [782, 600], [783, 630], [795, 610], [800, 635], [840, 622],
    [872, 613], [879, 613, 140], [890, 618], [930, 625], [960, 605], [990, 597], [998, 597, 254],
    [1015, 618], [1060, 600], [1100, 597], [1106, 597, 138], [1120, 610], [1160, 610], [1190, 600],
    [1212, 605], [1218, 605, 110], [1232, 600], [1400, 610],
  ];
  const c = p.ctx;
  c.strokeStyle = BLUE;
  c.lineWidth = 1.1;
  c.beginPath();
  for (let i = 0; i < pts.length - 1; i++) {
    const x0 = 240 + pts[i][0] / 3;
    const y0 = 400 + pts[i][1] / 2.52;
    const x1 = 240 + pts[i + 1][0] / 3;
    const y1 = 400 + pts[i + 1][1] / 2.52;
    if (pts[i][2] !== undefined) {
      const pk = 400 + pts[i][2] / 2.52;
      c.lineTo(x0 - 0.9, y0 - 4);
      c.lineTo(x0 - 0.2, pk);
      c.lineTo(x0 + 0.4, pk);
      c.lineTo(x0 + 1.8, y0 - 10);
      c.lineTo(x0 + 2.8, y1);
      continue;
    }
    for (let x = x0; x < x1; x += 0.4) {
      const f = (x - x0) / (x1 - x0);
      c.lineTo(x, y0 + (y1 - y0) * f + (rnd() - 0.5) * 2.4);
    }
  }
  c.stroke();
}

function drawSig3() {
  const p = setup("sig3");
  ticks(p, series(["0", "20000", "40000", "60000", "80000", "100000"], 280.3, 123.2),
    series(["2070", "2065", "2060", "2055", "2050", "2045", "2040"], 742, 36));
  const c = p.ctx;
  c.fillStyle = BLUE;
  c.fillRect(280.3, 836, 616, 52);
  c.strokeStyle = BLUE;
  c.lineWidth = 1;
  const step = 7.2;
  // a solid fringe around the band plus a few taller outliers, values come in whole steps
  const draw = (e) => {
    const r = rnd();
    const v = rnd() < 0.05 ? e * (1.3 + r * 0.9) : e * (0.45 + r * 0.7);
    return Math.round(v / step) * step;
  };
  c.beginPath();
  for (let x = 280.3; x < 896.3; x += 0.45) {
    const up = 10 + 9 * gauss(x, 430, 70) + 30 * gauss(x, 515, 24) + 34 * gauss(x, 605, 36);
    const dn = 8 + 34 * gauss(x, 520, 22) + 44 * gauss(x, 612, 24);
    c.moveTo(x, 840);
    c.lineTo(x, 836 - draw(up));
    c.moveTo(x, 884);
    c.lineTo(x, 888 + draw(dn));
  }
  [[351, 787, 840], [356, 884, 945], [528, 884, 981], [603, 736, 840], [610, 760, 840], [646, 884, 950],
   [590, 884, 965], [640, 884, 960], [722, 884, 943], [850, 884, 935]].forEach(([x, a, b]) => {
    c.moveTo(x, a);
    c.lineTo(x, b);
  });
  c.stroke();
}

function drawSpec1() {
  const p = setup("spec1");
  ticks(p, [["50", 1630]], series(["120", "100", "80", "60", "40"], 88, 43));
  spectrogram(p, 5, 3, (x, y) => {
    let v = 0.285 + (rnd() - 0.5) * 0.1;
    if (rnd() < 0.06) v -= 0.11;
    v += gauss(y, 239, 2.5) * 0.15 + gauss(y, 266, 2.5) * 0.14 + gauss(y, 132, 2) * 0.04;
    v += gauss(x, 1206, 3.2) * 0.27 + gauss(x, 1070, 6) * 0.18;
    if (y > 280) {
      const r = Math.min(1, (y - 280) / 60);
      v += (gauss(x, 1616, 2.6) + gauss(x, 1660, 3.4) + gauss(x, 1706, 3.4)) * r * 0.3;
      v += gauss(y, 292, 3) * 0.1 + gauss(y, 318, 3) * 0.26;
    }
    if (y > 332) v += (y - 332) * 0.025;
    return v;
  });
  p.ctx.fillStyle = "#e9e51c";
  p.ctx.fillRect(p.left, 343, p.cv.width, 5);
}

function drawSpec2() {
  const p = setup("spec2");
  ticks(p, [["140", 1659]], []);
  spectrogram(p, 2, 3, (x, y) => {
    let v = 0.39 + (rnd() - 0.5) * 0.1;
    if (rnd() < 0.03) v -= 0.09;
    const r = Math.max(0, Math.min(1, (y - 500) / 165));
    v += (gauss(x, 1622, 1.4) + gauss(x, 1658, 1.4) + gauss(x, 1705, 1.4)) * (0.04 + r * r * r * 0.32);
    if (y > 656) v += (gauss(x, 1622, 2) + gauss(x, 1658, 2) + gauss(x, 1705, 2)) * 0.5;
    if (y > 664) v = Math.max(v, 0.78);
    return v;
  });
}

function drawSpec3() {
  const p = setup("spec3");
  ticks(p, series(["50", "100", "150", "200", "250", "300", "350"], 1146.7, 85),
    series(["0", "20", "40", "60"], 991, -43));
  spectrogram(p, 2, 3, (x, y) => {
    let v = 0.32 + ((y - 723) / 270) * 0.085 + (rnd() - 0.5) * 0.085;
    if (rnd() < 0.02) v -= 0.08;
    v += gauss(y, 890, 2.2) * 0.05 + gauss(x, 1425, 50) * gauss(y, 945, 45) * 0.05;
    if (y > 978) v += (y - 978) * 0.028;
    return v;
  });
  p.ctx.fillStyle = "#f4e61e";
  p.ctx.fillRect(p.left, 987, p.cv.width, 6);
}

drawSig1();
drawSig2();
drawSig3();
drawSpec1();
drawSpec2();
drawSpec3();
```
